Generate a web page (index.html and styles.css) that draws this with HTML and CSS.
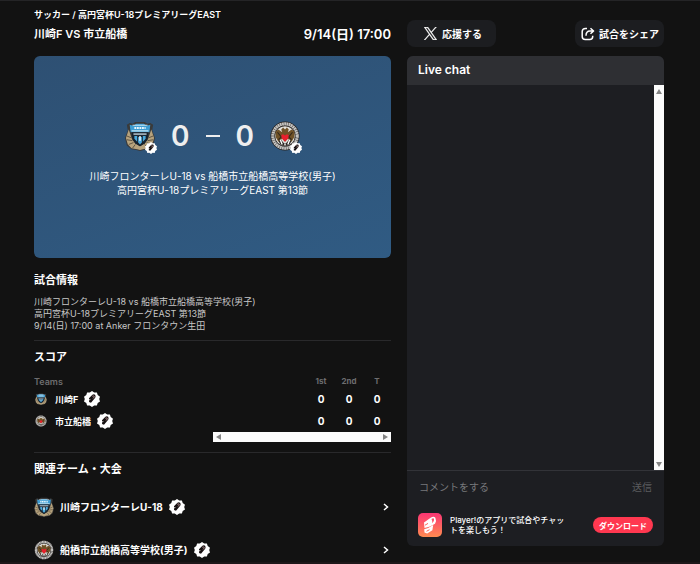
FILE: index.html
```html
<!DOCTYPE html>
<html lang="ja">
<head>
    <meta charset="UTF-8" />
    <meta name="viewport" content="width=device-width, initial-scale=1.0"/>
    <title>川崎F VS 市立船橋</title>
    <link rel="stylesheet" href="styles.css">
</head>
<body>
    <!-- shared icons -->
    <svg class="sprite" aria-hidden="true">
        <symbol id="crest-kawasaki" viewBox="0 0 32 32">
            <path d="M2 4l3-2 3 1 3-2h10l3 2 3-1 3 2-1 6 3 8-2 8-5 4-5 1-4 1-4-1-5-1-5-4-2-8 3-8z" fill="#3a3a3a"/>
            <path d="M4 9L1 18l2 7 4 4 6 1 3 1 3-1 6-1 4-4 2-7-3-9-3 9-4 6-5 3-5-3-4-6z" fill="#b7a37d"/>
            <path d="M2 16l5 2M2 20l6 1M4 25l5-2M8 29l3-4M30 16l-5 2M30 20l-6 1M28 25l-5-2M24 29l-3-4" stroke="#5c5140" stroke-width="1"/>
            <path d="M5 4l4 1 3-2h8l3 2 4-1-1 8H6z" fill="#3d9dd3"/>
            <path d="M8 4.500h16M7 10.500h18" stroke="#c5e3f1" stroke-width="1.200"/>
            <path d="M10 7.500h12" stroke="#e8f6fc" stroke-width="2.200" stroke-dasharray="2 .7"/>
            <path d="M7 12h18l-1 8-3 4-5 3-5-3-3-4z" fill="#17222d"/>
            <path d="M9 13h14v2H9z" fill="#9aa9b3"/>
            <path d="M10 16h3v6l-3-3zM22 16h-3v6l3-3zM14 17h4v6l-2 2-2-2z" fill="#4ba9dc"/>
            <path d="M16 16v5" stroke="#fff" stroke-width="1.500"/>
        </symbol>
        <symbol id="crest-funabashi" viewBox="0 0 32 32">
            <circle cx="16" cy="16" r="15.500" fill="#262322"/>
            <circle cx="16" cy="16" r="13" fill="none" stroke="#c4c3c0" stroke-width="3.400" stroke-dasharray="2 .4"/>
            <circle cx="16" cy="16" r="10.500" fill="#e2e0da"/>
            <path d="M16 9l-2-2-2 2 1 3-4-3-3 2v6l3 5 4-3 3 3 3-3 4 3 3-5v-6l-3-2-4 3 1-3-2-2z" fill="#6f5227"/>
            <path d="M8 12l4 5-3 3M24 12l-4 5 3 3" fill="none" stroke="#33271a" stroke-width="1.200"/>
            <path d="M12 15l2-1 2 1.500 2-1.500 2 1-.5 3.500L16 22l-3.500-3.500z" fill="#e8202d"/>
            <path d="M9 21l3-1 2 3 2 1 2-1 2-3 3 1-2 4-5 2-5-2z" fill="#2b2521"/>
            <path d="M11 20l2 5M21 20l-2 5M16 24v2" stroke="#fff" stroke-width="1.500"/>
        </symbol>
        <symbol id="badge" viewBox="0 0 16 16">
            <path d="M8 0l2.200 1.600 2.700-.1.800 2.600L16 5.700 15.200 8l.8 2.400-2.300 1.500-.8 2.600-2.700-.1L8 16l-2.200-1.600-2.700.1-.8-2.600L0 10.400.8 8 0 5.700l2.300-1.600.8-2.600 2.700.1z" fill="#fff"/>
            <path d="M5 7.200l3.400-3.500q1.500-1 2.700.1 1 1.400.1 3L7 11.800l-2-.9.200-1.600 2-1.600L5 8.500z" fill="#171112"/>
            <path d="M8.400 5.300q1.400-1 1.700.1 0 1.200-1 2" fill="none" stroke="#e0b5b5" stroke-width=".8"/>
        </symbol>
    </svg>

    <div class="page">
        <main class="match">
            <div class="match-header">
                <div class="category">サッカー / 高円宮杯U-18プレミアリーグEAST</div>
                <div class="title-row">
                    <h1>川崎F VS 市立船橋</h1>
                    <time class="date">9/14(日) 17:00</time>
                </div>
            </div>

            <section class="score-card">
                <div class="score-row">
                    <div class="crest">
                        <svg class="crest-img"><use href="#crest-kawasaki"/></svg>
                        <svg class="crest-badge"><use href="#badge"/></svg>
                    </div>
                    <span class="score">0</span>
                    <span class="dash"></span>
                    <span class="score">0</span>
                    <div class="crest">
                        <svg class="crest-img"><use href="#crest-funabashi"/></svg>
                        <svg class="crest-badge"><use href="#badge"/></svg>
                    </div>
                </div>
                <p>川崎フロンターレU-18 vs 船橋市立船橋高等学校(男子)<br>高円宮杯U-18プレミアリーグEAST 第13節</p>
            </section>

            <section class="info">
                <h2>試合情報</h2>
                <p>川崎フロンターレU-18 vs 船橋市立船橋高等学校(男子)<br>高円宮杯U-18プレミアリーグEAST 第13節<br>9/14(日) 17:00 at Anker フロンタウン生田</p>
            </section>

            <section class="scores">
                <h2>スコア</h2>
                <table class="score-table">
                    <thead>
                        <tr><th class="team-col">Teams</th><th>1st</th><th>2nd</th><th>T</th></tr>
                    </thead>
                    <tbody>
                        <tr>
                            <td class="team-col"><div class="team"><svg class="team-crest"><use href="#crest-kawasaki"/></svg>川崎F<svg class="badge"><use href="#badge"/></svg></div></td>
                            <td>0</td><td>0</td><td>0</td>
                        </tr>
                        <tr>
                            <td class="team-col"><div class="team"><svg class="team-crest"><use href="#crest-funabashi"/></svg>市立船橋<svg class="badge"><use href="#badge"/></svg></div></td>
                            <td>0</td><td>0</td><td>0</td>
                        </tr>
                    </tbody>
                </table>
                <div class="scrollbar-x"><span class="arrow left"></span><span class="arrow right"></span></div>
            </section>

            <section class="related">
                <h2>関連チーム・大会</h2>
                <a class="related-row" href="#">
                    <svg class="related-crest"><use href="#crest-kawasaki"/></svg>
                    <span>川崎フロンターレU-18</span>
                    <svg class="badge"><use href="#badge"/></svg>
                    <svg class="chevron" viewBox="0 0 6 8"><path d="M1 1l3.500 3L1 7"/></svg>
                </a>
                <a class="related-row" href="#">
                    <svg class="related-crest"><use href="#crest-funabashi"/></svg>
                    <span>船橋市立船橋高等学校(男子)</span>
                    <svg class="badge"><use href="#badge"/></svg>
                    <svg class="chevron" viewBox="0 0 6 8"><path d="M1 1l3.500 3L1 7"/></svg>
                </a>
            </section>
        </main>

        <aside class="side">
            <div class="actions">
                <button type="button" class="action cheer">
                    <svg class="x-icon" viewBox="0 0 24 24"><path fill="#fff" stroke="#fff" stroke-width=".6" d="M14.300 10.200L23.200 0h-2.100l-7.700 8.800L7.200 0H0l9.300 13.400L0 24h2.100l8.100-9.300 6.500 9.300h7.200zM2.900 1.600h3.200l14.900 20.900h-3.200z"/></svg>
                    応援する
                </button>
                <button type="button" class="action share">
                    <svg class="share-icon" viewBox="0 0 14 14"><path d="M6 1.500H4.500Q1.200 1.500 1.200 4.500v5q0 3 3 3h4.500q3 0 3-3V8.800M5 8.800q0-4.800 4-4.800h3M9.500 1.200L12.600 4 9.500 6.800"/></svg>
                    試合をシェア
                </button>
            </div>
            <div class="chat">
                <h2 class="chat-header">Live chat</h2>
                <div class="chat-body">
                    <div class="scrollbar-y"><span class="arrow up"></span><span class="arrow down"></span></div>
                </div>
                <form class="chat-form">
                    <input type="text" class="comment" placeholder="コメントをする" aria-label="コメントをする">
                    <button type="button" class="send">送信</button>
                </form>
                <div class="app-banner">
                    <svg class="app-icon" viewBox="0 0 24 24">
                        <defs><linearGradient id="app-bg" x1="0" y1="0" x2="0" y2="1"><stop offset="0" stop-color="#fb3574"/><stop offset="1" stop-color="#ff8b51"/></linearGradient></defs>
                        <rect width="24" height="24" rx="5" fill="url(#app-bg)"/>
                        <path d="M6 9.500L13 4.500q2.800-1.800 4.300.2 1.600 3-.3 6L12 13.500l-5.500 1.500z" fill="#fff"/>
                        <path d="M6.200 16.200l4-1.200 5-3-.8 5.200-5.200 3.300-2.700-1z" fill="#fff"/>
                        <path d="M13.500 6q2.200-1.500 2.600.3.200 2.400-1.800 4 .2-2.500-.8-4.300z" fill="#fd5368"/>
                        <path d="M7 12.200l3-1.800M8.500 18.300l3-1.600" stroke="#fd6a60" stroke-width="1"/>
                    </svg>
                    <p>Player!のアプリで試合やチャットを楽しもう！</p>
                    <button type="button" class="download">ダウンロード</button>
                </div>
            </div>
        </aside>
    </div>
</body>
</html>
```
FILE: styles.css
```css
* {
    box-sizing: border-box;
}
body {
    margin: 0;
    height: 100vh;
    overflow: hidden;
    background: #121212;
    border-top: 1px solid #242426;
    border-bottom: 2px solid #1d1719;
    color: #fff;
    font-family: Inter, "Noto Sans CJK JP", sans-serif;
    font-size: 9px;
}
h1, h2, p {
    margin: 0;
}
button, input {
    font-family: inherit;
    border: none;
    padding: 0;
}
button {
    cursor: pointer;
}
a {
    color: inherit;
    text-decoration: none;
}
svg {
    display: block;
    flex: none;
}
.sprite {
    position: absolute;
    width: 0;
    height: 0;
}
.page {
    display: grid;
    grid-template-columns: 357fr 257fr;
    gap: 16px;
    align-items: start;
    padding: 0 36px 0 34px;
}

/* match column */
.match-header {
    padding: 8px 0 13px;
}
.category {
    font-weight: 600;
    line-height: 12px;
}
.title-row {
    display: flex;
    justify-content: space-between;
    align-items: center;
    padding-top: 4px;
    line-height: 18px;
}
h1 {
    font-size: 11px;
    font-weight: 600;
}
.date {
    font-size: 13px;
    font-weight: 600;
}
.score-card {
    display: flex;
    flex-direction: column;
    align-items: center;
    padding: 60px 12px 61px;
    border-radius: 6px;
    background: linear-gradient(160deg, #2e5073, #305b83);
    text-align: center;
}
.score-row {
    display: flex;
    align-items: center;
    gap: 16px;
    height: 40px;
}
.crest {
    position: relative;
}
.crest-img {
    width: 30px;
    height: 30px;
}
.crest-badge {
    position: absolute;
    right: -2px;
    bottom: -3px;
    width: 12px;
    height: 12px;
}
.score {
    font-size: 28px;
    font-weight: 600;
    color: #eee;
}
.dash {
    width: 14px;
    height: 2px;
    background: #eee;
}
.score-card p {
    padding-top: 13px;
    font-size: 10px;
    line-height: 14px;
    font-weight: 400;
}
h2 {
    font-size: 11px;
    line-height: 16px;
    font-weight: 700;
}
.info {
    padding: 14px 0 8px;
}
.info p {
    padding-top: 8px;
    line-height: 12px;
    color: #c8c8c8;
}
.scores, .related {
    border-top: 1px solid #29292b;
}
.scores {
    padding: 8px 0 10px;
}
.score-table {
    width: 100%;
    margin-top: 9px;
    border-collapse: collapse;
    font-weight: 700;
}
.score-table th, .score-table td {
    width: 28px;
    height: 22px;
    padding: 0;
    text-align: center;
}
.score-table td {
    font-size: 10px;
}
.score-table th {
    height: 14px;
    font-size: 8px;
    color: #6d6d6f;
}
.score-table .team-col {
    width: auto;
    text-align: left;
    font-size: 9px;
}
.score-table th.team-col {
    font-weight: 600;
}
.team {
    display: flex;
    align-items: center;
    gap: 6px;
}
.team-crest {
    width: 12px;
    height: 12px;
    margin: 0 2px 0 1px;
}
.badge {
    width: 16px;
    height: 16px;
}
.scrollbar-x {
    display: flex;
    justify-content: space-between;
    align-items: center;
    width: 50%;
    height: 10px;
    margin-left: auto;
    padding: 0 3px;
    background: #fcfcfc;
}
.arrow {
    border: 3px solid transparent;
}
.arrow.left {
    border-right: 5px solid #858585;
    border-left: 0;
}
.arrow.right {
    border-left: 5px solid #858585;
    border-right: 0;
}
.arrow.up {
    border-bottom: 5px solid #858585;
    border-top: 0;
}
.arrow.down {
    border-top: 5px solid #858585;
    border-bottom: 0;
}
.related {
    padding-top: 8px;
}
.related h2 {
    margin-bottom: 8px;
}
.related-row {
    display: flex;
    align-items: center;
    gap: 6px;
    height: 43px;
    padding-right: 2px;
    font-size: 10px;
    font-weight: 700;
}
.related-crest {
    width: 20px;
    height: 20px;
}
.chevron {
    width: 6px;
    height: 8px;
    margin-left: auto;
    fill: none;
    stroke: #fff;
    stroke-width: 1.5;
}

/* chat column */
.actions {
    display: flex;
    justify-content: space-between;
    padding: 19px 0 9px;
}
.action {
    display: flex;
    justify-content: center;
    align-items: center;
    gap: 4px;
    height: 27px;
    padding: 0 5px 0 6px;
    border-radius: 8px;
    background: #1c1d20;
    color: #fff;
    font-size: 10px;
    font-weight: 600;
}
.action.cheer {
    gap: 5px;
    padding: 0 14px 0 17px;
}
.x-icon {
    width: 13px;
    height: 13px;
}
.share-icon {
    width: 14px;
    height: 14px;
    fill: none;
    stroke: #fff;
    stroke-width: 1.5;
    stroke-linejoin: round;
}
.chat {
    border-radius: 6px;
    overflow: hidden;
    background: #1d1e22;
}
.chat-header {
    padding: 6px 11px 7px;
    background: #2e2f33;
    font-size: 12px;
    font-weight: 600;
}
.chat-body {
    display: flex;
    justify-content: flex-end;
    height: 385px;
}
.scrollbar-y {
    display: flex;
    flex-direction: column;
    justify-content: space-between;
    align-items: center;
    width: 10px;
    padding: 4px 0 3px;
    background: #fcfcfc;
}
.chat-form {
    display: flex;
    align-items: center;
    height: 34px;
    padding: 0 12px 2px;
    border-top: 1px solid #323338;
}
.comment {
    flex: 1;
    min-width: 0;
    background: none;
    outline: none;
    color: #fff;
    font-size: 10px;
}
.comment::placeholder {
    color: #77787b;
}
.send {
    background: none;
    color: #5b5c5f;
    font-size: 10px;
}
.app-banner {
    display: flex;
    align-items: center;
    gap: 8px;
    height: 42px;
    padding: 0 11px;
}
.app-icon {
    width: 24px;
    height: 24px;
}
.app-banner p {
    width: 120px;
    font-size: 8px;
    font-weight: 500;
    line-height: 10px;
}
.download {
    height: 16px;
    margin-left: auto;
    padding: 0 6px;
    border-radius: 8px;
    background: #ff3850;
    color: #fff;
    font-size: 8px;
    font-weight: 700;
}
```
